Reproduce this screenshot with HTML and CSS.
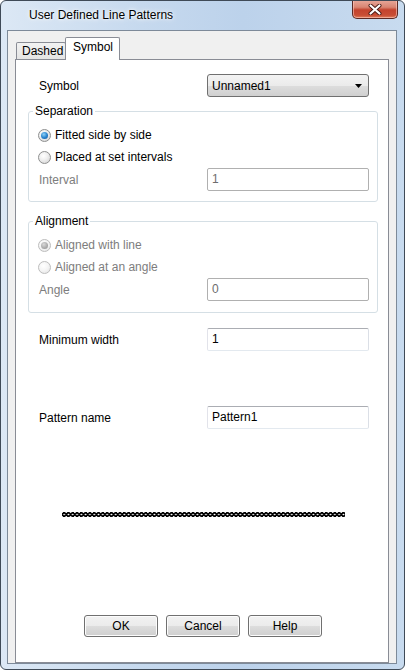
FILE: index.html
```html
<!DOCTYPE html>
<html>
<head>
<meta charset="utf-8">
<link rel="stylesheet" href="styles.css">
</head>
<body>
<div class="window">
  <div class="titlebar">
    <span class="title">User Defined Line Patterns</span>
    <div class="close">
      <svg width="14" height="11" viewBox="0 0 14 11">
        <path d="M2.5 1.5 L11.5 9.5 M11.5 1.5 L2.5 9.5" stroke="#4a1a14" stroke-width="4" stroke-linecap="round"/>
        <path d="M2.5 1.5 L11.5 9.5 M11.5 1.5 L2.5 9.5" stroke="#ffffff" stroke-width="2.2" stroke-linecap="round"/>
      </svg>
    </div>
  </div>
  <div class="client">
    <div class="tabs">
      <div class="tab">Dashed</div>
      <div class="tab active">Symbol</div>
    </div>
    <div class="panel">
      <div class="row row-symbol">
        <span class="label">Symbol</span>
        <div class="combo">
          <span>Unnamed1</span>
          <svg width="7" height="4" viewBox="0 0 7 4"><path d="M0 0 H7 L3.5 4 Z" fill="#000"/></svg>
        </div>
      </div>

      <fieldset class="group group-sep">
        <legend>Separation</legend>
        <div class="radio-row first"><span class="radio checked"></span><span>Fitted side by side</span></div>
        <div class="radio-row"><span class="radio"></span><span>Placed at set intervals</span></div>
        <div class="row row-field">
          <span class="label disabled">Interval</span>
          <div class="input disabled">1</div>
        </div>
      </fieldset>

      <fieldset class="group group-align">
        <legend>Alignment</legend>
        <div class="radio-row first disabled"><span class="radio checked off"></span><span>Aligned with line</span></div>
        <div class="radio-row disabled"><span class="radio off"></span><span>Aligned at an angle</span></div>
        <div class="row row-field">
          <span class="label disabled">Angle</span>
          <div class="input disabled">0</div>
        </div>
      </fieldset>

      <div class="row row-minwidth">
        <span class="label">Minimum width</span>
        <div class="input">1</div>
      </div>

      <div class="row row-name">
        <span class="label">Pattern name</span>
        <div class="input">Pattern1</div>
      </div>

      <div class="pattern-line"></div>

      <div class="buttons">
        <div class="btn">OK</div>
        <div class="btn">Cancel</div>
        <div class="btn">Help</div>
      </div>
    </div>
  </div>
</div>
</body>
</html>
```

FILE: styles.css
```css
* { box-sizing: border-box; }
html, body { margin: 0; padding: 0; background: #fff; }
body {
  font-family: "Liberation Sans", Arial, sans-serif;
  font-size: 12px;
  color: #000;
}
.window {
  width: 405px;
  height: 670px;
  border: 1px solid #3f4a57;
  border-radius: 6px;
  background: linear-gradient(to right, #dce8f5 0%, #c6d9ee 35%, #bcd2eb 60%, #c8dbef 100%);
  display: flex;
  flex-direction: column;
  overflow: hidden;
}
.titlebar {
  height: 29px;
  display: flex;
  align-items: flex-start;
  flex: none;
}
.title {
  padding-left: 28px;
  line-height: 29px;
  font-size: 12px;
  color: #000;
  text-shadow: 0 0 6px #fff, 0 0 3px #fff;
}
.close {
  margin-left: auto;
  margin-right: 6px;
  width: 46px;
  height: 19px;
  margin-top: -1px;
  border: 1px solid #5b2a25;
  border-top: none;
  border-radius: 0 0 5px 5px;
  background: linear-gradient(#e9a99b 0%, #d98573 40%, #c4432e 55%, #c84e35 85%, #e2805e 100%);
  box-shadow: inset 0 0 0 1px rgba(255,210,200,0.55);
  display: flex;
  align-items: center;
  justify-content: center;
}
.client {
  flex: 1;
  margin: 0 7px 5px 6px;
  border: 1px solid #7d8a99;
  background: #f0f0f0;
  padding: 0 7px;
  display: flex;
  flex-direction: column;
}
.tabs {
  height: 28px;
  display: flex;
  align-items: flex-end;
  flex: none;
}
.tab {
  height: 17px;
  width: 50px;
  margin-left: 1px;
  border: 1px solid #898c95;
  border-bottom: none;
  border-radius: 2px 2px 0 0;
  background: linear-gradient(#f2f2f2, #e4e4e4);
  padding-left: 5px;
  line-height: 17px;
}
.tab.active {
  height: 23px;
  width: 55px;
  margin-left: -1px;
  margin-bottom: -1px;
  background: #fff;
  position: relative;
  z-index: 1;
  padding-left: 7px;
  line-height: 18px;
}
.panel {
  flex: 1;
  background: #fff;
  border: 1px solid #898c95;
  display: flex;
  flex-direction: column;
}
.row {
  display: grid;
  grid-template-columns: 168px 162px;
  align-items: center;
  height: 23px;
}
.row-symbol { margin-top: 14px; padding-left: 23px; }
.row-minwidth { margin-top: 15px; padding-left: 23px; }
.row-name { margin-top: 55px; padding-left: 23px; }
.label { color: #000; }
.label.disabled { color: #7d7d7d; padding-left: 1px; }
.combo {
  height: 23px;
  border: 1px solid #707070;
  border-radius: 3px;
  background: linear-gradient(#f3f3f3 0%, #ebebeb 50%, #dddddd 51%, #d0d0d0 100%);
  display: flex;
  align-items: center;
  justify-content: space-between;
  padding: 0 6px 0 4px;
}
.input {
  height: 23px;
  border: 1px solid;
  border-color: #abadb3 #dbdfe6 #e3e9ef #e2e3ea;
  border-radius: 2px;
  background: #fff;
  padding-left: 4px;
  line-height: 21px;
}
.input.disabled {
  border-color: #b0b0b0;
  color: #6d6d6d;
}
.group {
  margin: 0 10px 0 12px;
  padding: 0 9px 10px 9px;
  border: 1px solid #d5dfe5;
  border-radius: 3px;
  min-width: 0;
}
.group legend {
  padding: 0 2px;
  margin-left: -5px;
  line-height: 16px;
}
.group-sep { margin-top: 6px; }
.group-sep .radio-row.first { margin-top: 5px; }
.group-align { margin-top: 11px; padding-bottom: 11px; }
.group-align .radio-row.first { margin-top: 5px; }
.group .row { grid-template-columns: 169px 162px; }
.radio-row {
  height: 22px;
  display: flex;
  align-items: center;
  gap: 4px;
}
.radio-row.disabled { color: #7d7d7d; }
.radio {
  width: 13px;
  height: 13px;
  border-radius: 50%;
  border: 1px solid #8e8f8f;
  background: radial-gradient(circle at 40% 35%, #ffffff 0%, #f0f0f0 40%, #cfcfcf 100%);
  display: flex;
  align-items: center;
  justify-content: center;
  flex: none;
}
.radio.checked::after {
  content: "";
  width: 7px;
  height: 7px;
  border-radius: 50%;
  background: radial-gradient(circle at 40% 35%, #8fd1f7 0%, #2d87d0 50%, #0c4f9a 100%);
}
.radio.off {
  border-color: #bdbdbd;
  background: radial-gradient(circle at 40% 35%, #ffffff 0%, #f4f4f4 50%, #e0e0e0 100%);
}
.radio.checked.off::after {
  background: radial-gradient(circle at 40% 35%, #d9d9d9 0%, #a9a9a9 60%, #8c8c8c 100%);
}
.pattern-line {
  margin: 83px 0 0 46px;
  width: 283px;
  height: 5px;
  background:
    radial-gradient(circle, #fff 0 0.6px, #000 1.1px 2.2px, transparent 2.7px) 0 0 / 4.3px 5px repeat-x,
    linear-gradient(transparent 1px, #000 1px 4px, transparent 4px);
}
.buttons {
  margin: 98px 0 0 68px;
  display: flex;
  gap: 8px;
}
.btn {
  width: 74px;
  height: 22px;
  border: 1px solid #707070;
  border-radius: 3px;
  background: linear-gradient(#f2f2f2 0%, #ebebeb 50%, #dddddd 51%, #cfcfcf 100%);
  box-shadow: inset 0 0 0 1px #fcfcfc;
  text-align: center;
  line-height: 20px;
}
```
